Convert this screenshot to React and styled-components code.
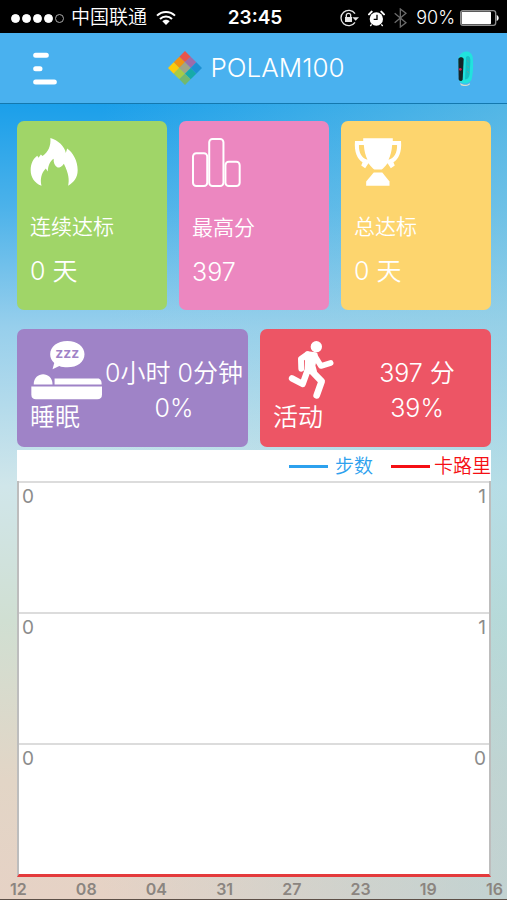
import styled, { createGlobalStyle } from "styled-components"

const COLORS = {
    SKY: "#49b1ef",
    GREEN: "#a0d568",
    PINK: "#ec87c0",
    YELLOW: "#fdd56e",
    PURPLE: "#9f83c7",
    RED: "#ed5565",
    STEPS: "#2da1ee",
    CALORIES: "#f50f14",
    AXIS: "#bdbdbd",
    GRID: "#dcdcdc",
    LABEL: "#8c8c8c",
}

const DATES = ["12", "08", "04", "31", "27", "23", "19", "16"]
const BANDS = [
    { left: "0", right: "1" },
    { left: "0", right: "1" },
    { left: "0", right: "0" },
]

const WifiIcon = () => (
    <svg width="20" height="16" viewBox="0 0 60 48" fill="none" stroke="#fff" strokeWidth="6" aria-hidden="true">
        <path d="M3 17C18 2 42 2 57 17" />
        <path d="M12 27C22 17 38 17 48 27" />
        <path d="M30 45L19 34C25 28 35 28 41 34Z" fill="#fff" stroke="none" />
    </svg>
)

const LockIcon = () => (
    <svg width="19" height="18" viewBox="0 0 57 54" fill="none" stroke="#e4e4e4" strokeWidth="4" aria-hidden="true">
        <path d="M45 14A23 23 0 1 0 45 40" />
        <path d="M37 25H57L47 35Z" fill="#e4e4e4" stroke="none" />
        <rect x="15" y="24" width="21" height="15" fill="#e4e4e4" stroke="none" />
        <path d="M19 25V19C19 11 32 11 32 19V25" />
    </svg>
)

const AlarmIcon = () => (
    <svg width="17" height="17" viewBox="0 0 51 51" fill="none" stroke="#fff" aria-hidden="true">
        <circle cx="25" cy="27" r="20" fill="#fff" stroke="none" />
        <path d="M3 13L11 5M48 13L40 5" strokeWidth="6" strokeLinecap="round" />
        <path d="M11 43L7 48M40 43L44 48" strokeWidth="4" />
        <path d="M27 14V28H17" stroke="#000" strokeWidth="4" />
    </svg>
)

const BluetoothIcon = () => (
    <svg width="13" height="20" viewBox="0 0 39 60" fill="none" stroke="#6c6c6c" strokeWidth="4" aria-hidden="true">
        <path d="M2 16L36 44L19 57V3L36 16L2 44" />
    </svg>
)

const BatteryIcon = () => (
    <svg width="39" height="16" viewBox="0 0 117 48" aria-hidden="true">
        <rect x="2" y="2" width="105" height="44" rx="7" fill="none" stroke="#8f8f8f" strokeWidth="4" />
        <rect x="5" y="5" width="88" height="38" rx="3" fill="#fff" />
        <path d="M110 15C118 18 118 30 110 33Z" fill="#fff" />
    </svg>
)

const Logo = () => (
    <svg width="34" height="34" viewBox="0 0 102 102" aria-hidden="true">
        <g transform="translate(51 0) rotate(45)">
            <rect width="24" height="24" fill="#e8554d" />
            <rect x="24" width="24" height="24" fill="#9c6cab" />
            <rect x="48" width="24" height="24" fill="#1d90d2" />
            <rect y="24" width="24" height="24" fill="#f19313" />
            <rect x="24" y="24" width="24" height="24" fill="#a1a488" />
            <rect x="48" y="24" width="24" height="24" fill="#16aaa9" />
            <rect y="48" width="24" height="24" fill="#fecb0b" />
            <rect x="24" y="48" width="24" height="24" fill="#a9cb45" />
            <rect x="48" y="48" width="24" height="24" fill="#72b86d" />
        </g>
    </svg>
)

const MenuIcon = () => (
    <svg width="24" height="33" viewBox="0 0 72 99" stroke="#fff" strokeWidth="15" strokeLinecap="round" aria-hidden="true">
        <path d="M8 10H40M8 50H21M8 90H64" />
    </svg>
)

const BandIcon = () => (
    <svg width="17" height="35" viewBox="0 0 51 105" aria-hidden="true">
        <path d="M10 95C17 103 31 104 38 96V101C30 106 17 106 11 102Z" fill="#d9dcc9" />
        <path d="M16 5C28 -3 45 3 47 18C50 40 48 66 44 85C39 99 20 101 8 92L4 28C5 18 9 9 16 5Z" fill="#21e2de" />
        <path d="M27 18C35 10 41 17 40 32L38 70C36 82 30 86 24 85Z" fill="#16bfc5" />
        <path d="M4 24C6 18 18 17 20 24L17 86C14 92 6 91 5 85Z" fill="#152527" />
        <path d="M31 28L35 34M31 44L35 50M31 60L35 66" stroke="#59a5a5" strokeWidth="3" />
        <circle cx="10" cy="55" r="4" fill="#dc1747" />
    </svg>
)

const FlameIcon = () => (
    <svg width="48" height="48" viewBox="86 86 146 146" fill="#fff" aria-hidden="true">
        <path d="M148 86C171 93 192 111 195 132L199 118C217 131 231 155 231 184C231 207 218 222 202 231C206 214 204 193 189 164C184 172 177 176 170 176C161 171 157 160 158 149C148 155 141 168 140 188L134 179C121 192 116 211 121 231C100 224 88 205 88 184C88 163 96 149 108 140L112 146L119 136L124 141C141 130 150 110 148 86Z" />
    </svg>
)

const BarsIcon = () => (
    <svg width="49" height="49" viewBox="572 85 148 148" fill="none" stroke="#fff" strokeWidth="6" aria-hidden="true">
        <rect x="575" y="131" width="43" height="99" rx="10" />
        <rect x="624" y="88" width="43" height="142" rx="10" />
        <rect x="673" y="157" width="43" height="73" rx="10" />
    </svg>
)

const TrophyIcon = () => (
    <svg width="48" height="48" viewBox="300 86 146 146" fill="#fff" fillRule="evenodd" aria-hidden="true">
        <path d="M328 87H418V95H443C446 130 435 150 420 160L424 170L412 178L402 163C395 172 388 180 384 182H362C358 180 351 172 344 163L334 178L322 170L326 160C311 150 300 130 303 95H328ZM315 107C314 130 324 148 341 152C335 139 331 125 330 107ZM416 107C415 125 411 139 405 152C422 148 432 130 431 107Z" />
        <path d="M360 191H386L408 218V231H337V218Z" />
    </svg>
)

const SleepIcon = () => (
    <svg width="72" height="60" viewBox="96 60 214 178" fill="#fff" aria-hidden="true">
        <path d="M204 63C234 63 255 80 255 102C255 125 234 141 204 141C195 141 187 140 180 137L160 147L165 128C157 121 153 112 153 102C153 80 174 63 204 63Z" />
        <text x="204" y="114" fill={COLORS.PURPLE} fontSize="42" fontWeight="600" textAnchor="middle">zzz</text>
        <path d="M104 192C104 152 160 152 160 192Z" />
        <path d="M166 192V174H294C303 174 306 181 306 192Z" />
        <path d="M97 198H307V222Q307 236 293 236H111Q97 236 97 222Z" />
    </svg>
)

const RunIcon = () => (
    <svg width="48" height="60" viewBox="98 60 144 180" fill="none" stroke="#fff" strokeLinecap="round" strokeLinejoin="round" aria-hidden="true">
        <circle cx="189" cy="80" r="17" fill="#fff" stroke="none" />
        <path d="M162 101L186 104L179 137L184 155L161 155L162 135Z" fill="#fff" strokeWidth="14" />
        <path d="M162 103L143 117L144 146" strokeWidth="18" />
        <path d="M184 107L203 138L232 129" strokeWidth="17" />
        <path d="M162 153L148 192L116 175" strokeWidth="19" />
        <path d="M175 153L205 184L190 226" strokeWidth="20" />
    </svg>
)

const StatCard = ({ color, icon, title, value }) => (
    <Stat $color={color}>
        {icon}
        <StatTitle>{title}</StatTitle>
        <StatValue>{value}</StatValue>
    </Stat>
)

const SummaryCard = ({ color, icon, title, value, percent }) => (
    <Summary $color={color}>
        <SummaryKind>
            <SummaryIcon>{icon}</SummaryIcon>
            <SummaryText>{title}</SummaryText>
        </SummaryKind>
        <SummaryNumbers>
            <SummaryText>{value}</SummaryText>
            <SummaryText>{percent}</SummaryText>
        </SummaryNumbers>
    </Summary>
)

const Chart = () => (
    <ChartContainer>
        <Legend>
            <LegendItem $color={COLORS.STEPS} $gap="7px">步数</LegendItem>
            <LegendItem $color={COLORS.CALORIES} $gap="4px">卡路里</LegendItem>
        </Legend>
        <Plot>
            {BANDS.map((band, i) => (
                <Band key={i}>
                    <span>{band.left}</span>
                    <span>{band.right}</span>
                </Band>
            ))}
        </Plot>
        <Dates>
            {DATES.map((date) => (
                <span key={date}>{date}</span>
            ))}
        </Dates>
    </ChartContainer>
)

export default function App() {
    return (
        <Page>
            <GlobalStyle />
            <StatusBar>
                <Carrier>
                    <Signal>
                        <Dot $on />
                        <Dot $on />
                        <Dot $on />
                        <Dot $on />
                        <Dot />
                    </Signal>
                    中国联通
                    <WifiIcon />
                </Carrier>
                <Time>23:45</Time>
                <StatusIcons>
                    <LockIcon />
                    <AlarmIcon />
                    <BluetoothIcon />
                    <Charge>
                        90%
                        <BatteryIcon />
                    </Charge>
                </StatusIcons>
            </StatusBar>
            <Header>
                <IconButton aria-label="菜单">
                    <MenuIcon />
                </IconButton>
                <Title>
                    <Logo />
                    POLAM100
                </Title>
                <IconButton aria-label="设备" $end>
                    <BandIcon />
                </IconButton>
            </Header>
            <Content>
                <StatRow>
                    <StatCard color={COLORS.GREEN} icon={<FlameIcon />} title="连续达标" value="0 天" />
                    <StatCard color={COLORS.PINK} icon={<BarsIcon />} title="最高分" value="397" />
                    <StatCard color={COLORS.YELLOW} icon={<TrophyIcon />} title="总达标" value="0 天" />
                </StatRow>
                <SummaryRow>
                    <SummaryCard color={COLORS.PURPLE} icon={<SleepIcon />} title="睡眠" value="0小时 0分钟" percent="0%" />
                    <SummaryCard color={COLORS.RED} icon={<RunIcon />} title="活动" value="397 分" percent="39%" />
                </SummaryRow>
                <Chart />
            </Content>
        </Page>
    )
}

const GlobalStyle = createGlobalStyle`
    * {
        box-sizing: border-box;
    }
    body {
        margin: 0;
        font-family: Inter, "Noto Sans CJK SC", sans-serif;
        font-weight: 350;
    }
    svg {
        display: block;
        flex-shrink: 0;
    }
`

const Page = styled.div`
    display: flex;
    flex-direction: column;
    min-height: 100vh;
    color: white;
`

const StatusBar = styled.div`
    display: grid;
    grid-template-columns: 1fr auto 1fr;
    align-items: center;
    height: 33px;
    padding: 3px 8px 0 11px;
    background: black;
    font-size: 18px;
    line-height: 24px;
    white-space: nowrap;
`

const Carrier = styled.div`
    display: flex;
    align-items: center;
    gap: 9px;
    font-size: 19px;
    line-height: 28px;
`

const Signal = styled.div`
    display: flex;
    gap: 2px;
    margin-right: -2px;
`

const Dot = styled.span`
    width: 9px;
    height: 9px;
    border: 1px solid ${({ $on }) => ($on ? "white" : "#aaa")};
    border-radius: 50%;
    background: ${({ $on }) => ($on ? "white" : "transparent")};
`

const Time = styled.div`
    font-size: 19px;
    font-weight: 600;
`

const StatusIcons = styled.div`
    display: flex;
    justify-content: flex-end;
    align-items: center;
    gap: 9px;
`

const Charge = styled.div`
    display: flex;
    align-items: center;
    gap: 5px;
`

const Header = styled.header`
    display: grid;
    grid-template-columns: 1fr auto 1fr;
    align-items: center;
    height: 71px;
    padding: 0 33px;
    border-bottom: 1px solid #1478ae;
    background: ${COLORS.SKY};
`

const IconButton = styled.button`
    justify-self: ${({ $end }) => ($end ? "end" : "start")};
    padding: 0;
    border: 0;
    background: none;
    cursor: pointer;
`

const Title = styled.h1`
    display: flex;
    align-items: center;
    gap: 9px;
    margin: 0;
    padding-left: 5px;
    font-size: 26px;
    font-weight: 350;
    line-height: 32px;
`

const Content = styled.main`
    flex: 1;
    padding: 17px 16px 0 17px;
    border-bottom: 1px solid #5d5048;
    background:
        linear-gradient(to right, rgba(150, 210, 225, 0) 20%, rgba(150, 210, 225, 0.45)),
        linear-gradient(#1b9fea 0%, #4cb2ea 13%, #97cfec 28%, #d0e6ea 48%, #d0dfd2 65%, #e2d5c6 85%, #e6d2c5 100%);
`

const StatRow = styled.div`
    display: grid;
    grid-template-columns: repeat(3, 1fr);
    gap: 12px;
`

const Stat = styled.section`
    height: 189px;
    padding: 17px 13px;
    border-radius: 7px;
    background: ${({ $color }) => $color};
`

const StatTitle = styled.h2`
    margin: 25px 0 0;
    font-size: 21px;
    font-weight: 350;
    line-height: 32px;
`

const StatValue = styled.div`
    margin-top: 12px;
    font-size: 25px;
    line-height: 32px;
`

const SummaryRow = styled.div`
    display: grid;
    grid-template-columns: repeat(2, 1fr);
    gap: 12px;
    margin-top: 19px;
`

const Summary = styled.section`
    display: grid;
    grid-template-columns: 74px 1fr;
    height: 118px;
    padding: 11px 0 0 13px;
    border-radius: 7px;
    background: ${({ $color }) => $color};
    font-size: 25px;
    line-height: 35px;
    white-space: nowrap;
`

const SummaryKind = styled.div`
    display: flex;
    flex-direction: column;
`

const SummaryIcon = styled.div`
    display: flex;
    justify-content: center;
`

const SummaryText = styled.div``

const SummaryNumbers = styled.div`
    display: flex;
    flex-direction: column;
    align-items: center;
    padding: 16px 4px 0 0;
`

const ChartContainer = styled.section`
    margin-top: 3px;
`

const Legend = styled.div`
    display: flex;
    justify-content: flex-end;
    align-items: center;
    gap: 18px;
    height: 31px;
    padding-top: 2px;
    background: white;
    font-size: 19px;
    line-height: 24px;
`

const LegendItem = styled.div`
    display: flex;
    align-items: center;
    gap: ${({ $gap }) => $gap};
    color: ${({ $color }) => $color};

    &::before {
        content: "";
        width: 39px;
        height: 3px;
        background: ${({ $color }) => $color};
    }
`

const Plot = styled.div`
    border: 2px solid ${COLORS.AXIS};
    border-top: 0;
    border-bottom: 3px solid #e43a3c;
    background: white;
`

const Band = styled.div`
    display: flex;
    justify-content: space-between;
    height: 131px;
    padding: 2px 3px;
    border-top: 2px solid ${COLORS.GRID};
    color: ${COLORS.LABEL};
    font-size: 19px;
    font-weight: 400;
    line-height: 24px;
`

const Dates = styled.div`
    display: flex;
    justify-content: space-between;
    margin: 0 -12px 0 -7px;
    padding-top: 2px;
    color: #8b8580;
    font-size: 16px;
    font-weight: 600;
    line-height: 20px;
`
